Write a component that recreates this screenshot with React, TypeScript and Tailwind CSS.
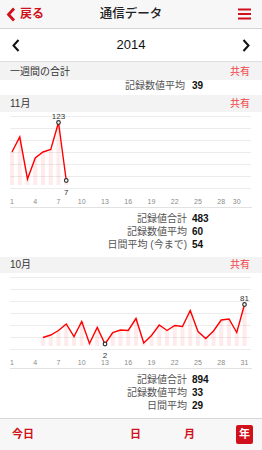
import React from 'react';

type Point = [number, number];

// 11月のデータ (日, 値)
const novData: Point[] = [
  [1, 64], [2, 94], [3, 10], [4, 52], [5, 64], [6, 69], [7, 123], [8, 7],
];

// 10月のデータ
const octData: Point[] = [
  [5, 15], [6, 20], [7, 29], [8, 42], [9, 17], [10, 47], [11, 3], [12, 35],
  [13, 2], [14, 25], [15, 30], [16, 29], [17, 53], [18, 4], [19, 19], [20, 40],
  [21, 29], [22, 39], [23, 37], [24, 69], [25, 27], [26, 13], [27, 28], [28, 50],
  [29, 52], [30, 25], [31, 81],
];

const xOf = (d: number) => 12 + (d - 1) * 7.75;
const yOf = (v: number) => 72 - v * 0.5;

interface ChartProps {
  data: Point[];
  ticks: number[];
  hi: Point;
  lo: Point;
}

const Chart: React.FC<ChartProps> = ({ data, ticks, hi, lo }) => {
  const line = data.map(([d, v]) => `${xOf(d)},${yOf(v)}`).join(' ');
  return (
    <svg width="262" height="96" className="block">
      {[0, 1, 2, 3, 4, 5, 6].map((i) => (
        <line key={i} x1="10" x2="251" y1={4.5 + 12 * i} y2={4.5 + 12 * i} stroke="#ececec" strokeWidth="1" />
      ))}
      {data.map(([d, v]) => (
        <rect key={d} x={xOf(d) - 2} y={yOf(v)} width="4" height={73 - yOf(v)} fill="#ff2020" fillOpacity="0.09" />
      ))}
      <polyline points={line} fill="none" stroke="#ff0000" strokeWidth="1.4" strokeLinejoin="miter" />
      {[hi, lo].map(([d, v]) => (
        <circle key={`m${d}`} cx={xOf(d)} cy={yOf(v)} r="1.8" fill="#fff" stroke="#333" strokeWidth="1.2" />
      ))}
      <text x={xOf(hi[0])} y={yOf(hi[1]) - 4} textAnchor="middle" fontSize="8" fill="#333">{hi[1]}</text>
      <text x={xOf(lo[0])} y={yOf(lo[1]) + 14} textAnchor="middle" fontSize="8" fill="#333">{lo[1]}</text>
      {ticks.map((t) => (
        <text key={t} x={xOf(t)} y="92" textAnchor="middle" fontSize="7" fill="#8a8a8a">{t}</text>
      ))}
      <line x1="10" x2="252" y1="95.5" y2="95.5" stroke="#e2e2e2" strokeWidth="1" />
    </svg>
  );
};

const SectionHeader = ({ title }: { title: string }) => (
  <div className="h-[17px] bg-[#f3f3f3] flex items-center justify-between pl-[10px] pr-[12px] text-[10px]">
    <span className="text-[#333]">{title}</span>
    <span className="text-[#f0444a]">共有</span>
  </div>
);

const Stats = ({ rows }: { rows: [string, string][] }) => (
  <div className="grid grid-cols-[187px_auto] gap-x-[5px] text-[10px] leading-[13px] pt-[4px] pb-[6px]">
    {rows.map(([label, value]) => (
      <React.Fragment key={label}>
        <span className="text-right text-[#555]">{label}</span>
        <span className="font-bold text-[#111]">{value}</span>
      </React.Fragment>
    ))}
  </div>
);

export default function App() {
  return (
    <div className="w-[262px] h-[450px] bg-white overflow-hidden flex flex-col font-['Liberation_Sans','Noto_Sans_CJK_JP',sans-serif]">
      {/* ナビゲーションバー */}
      <div className="h-[29px] shrink-0 bg-[#f7f7f7] border-b border-[#d4d4d4] grid grid-cols-[1fr_auto_1fr] items-center">
        <div className="flex items-center pl-[6px] gap-[4px] text-[#d0101a]">
          <svg width="10" height="15" viewBox="0 0 10 15">
            <polyline points="8,1.5 2.5,7.5 8,13.5" fill="none" stroke="#d0101a" strokeWidth="2.8" />
          </svg>
          <span className="text-[12px] font-bold">戻る</span>
        </div>
        <span className="text-[12.5px] font-medium text-[#222]">通信データ</span>
        <div className="flex justify-end pr-[11px]">
          <svg width="13" height="12" viewBox="0 0 13 12">
            <rect x="0" y="0.5" width="13" height="2" fill="#d0101a" />
            <rect x="0" y="5" width="13" height="2" fill="#d0101a" />
            <rect x="0" y="9.5" width="13" height="2" fill="#d0101a" />
          </svg>
        </div>
      </div>

      {/* 年の切り替え */}
      <div className="h-[33px] shrink-0 flex items-center justify-between px-[12px] border-b border-[#dedede]">
        <svg width="8" height="13" viewBox="0 0 8 13">
          <polyline points="6.5,1 1.5,6.5 6.5,12" fill="none" stroke="#111" strokeWidth="2" />
        </svg>
        <span className="text-[13px] text-[#111]">2014</span>
        <svg width="8" height="13" viewBox="0 0 8 13">
          <polyline points="1.5,1 6.5,6.5 1.5,12" fill="none" stroke="#111" strokeWidth="2" />
        </svg>
      </div>

      <div className="h-[18px] shrink-0 bg-[#f3f3f3] flex items-center justify-between pl-[10px] pr-[12px] text-[10px]">
        <span className="text-[#333]">一週間の合計</span>
        <span className="text-[#f0444a]">共有</span>
      </div>
      <div className="h-[15px] shrink-0 overflow-hidden grid grid-cols-[185px_auto] gap-x-[7px] text-[10px] leading-[10px] pt-[1px]">
        <span className="text-right text-[#555]">記録数値平均</span>
        <span className="font-bold text-[#111]">39</span>
      </div>

      <SectionHeader title="11月" />
      <Chart data={novData} ticks={[1, 4, 7, 10, 13, 16, 19, 22, 25, 28, 30]} hi={[7, 123]} lo={[8, 7]} />
      <Stats rows={[['記録値合計', '483'], ['記録数値平均', '60'], ['日間平均 (今まで)', '54']]} />

      <SectionHeader title="10月" />
      <Chart data={octData} ticks={[1, 4, 7, 10, 13, 16, 19, 22, 25, 28, 31]} hi={[31, 81]} lo={[13, 2]} />
      <Stats rows={[['記録値合計', '894'], ['記録数値平均', '33'], ['日間平均', '29']]} />

      <div className="flex-1" />

      {/* タブバー */}
      <div className="h-[32px] shrink-0 bg-[#f7f7f7] border-t border-[#d8d8d8] flex items-center pl-[12px] pr-[9px] text-[11px] font-bold text-[#d0101a]">
        <span>今日</span>
        <div className="flex-1" />
        <span>日</span>
        <span className="ml-[43px]">月</span>
        <span className="ml-[41px] w-[17px] h-[19px] rounded-[2px] bg-[#d0101a] text-white flex items-center justify-center">年</span>
      </div>
    </div>
  );
}
